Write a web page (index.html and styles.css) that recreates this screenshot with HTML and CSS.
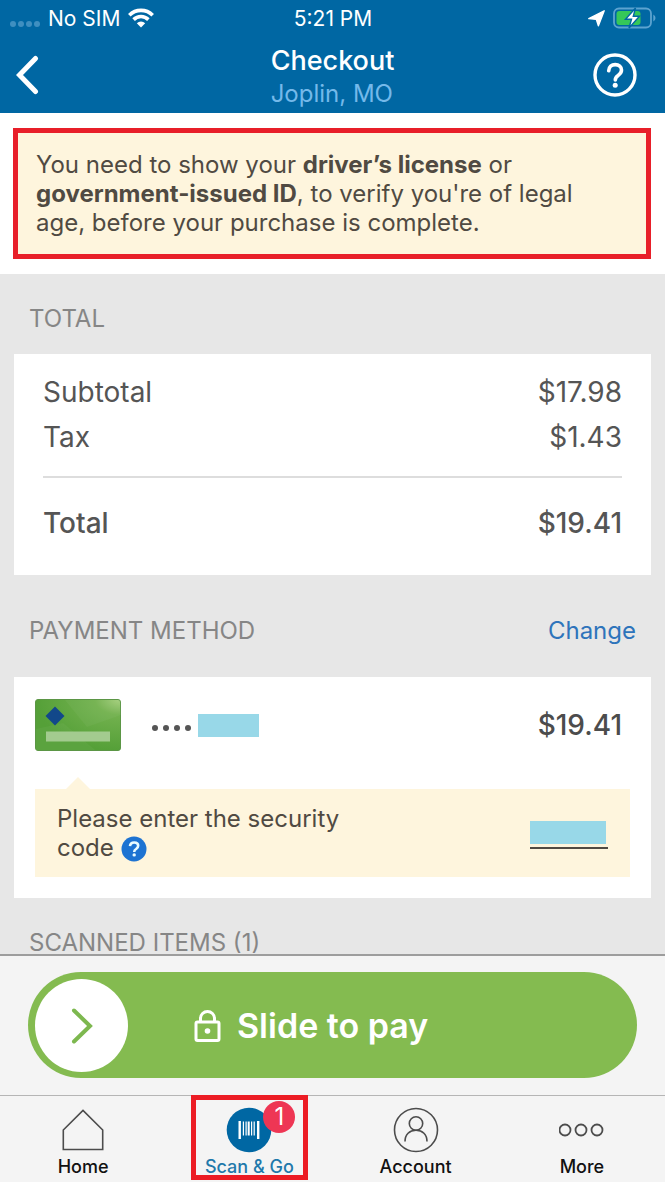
FILE: index.html
```
<!DOCTYPE html>
<html lang="en">
<head>
<meta charset="utf-8">
<meta name="viewport" content="width=device-width, initial-scale=1">
<title>Checkout</title>
<link rel="stylesheet" href="styles.css">
</head>
<body>
<div class="app">
  <header class="header">
    <div class="status">
      <div class="status-left">
        <svg class="signal" width="30" height="8" viewBox="0 0 30 8" fill="#3f8fc0"><circle cx="3" cy="4" r="3"/><circle cx="11" cy="4" r="3"/><circle cx="19" cy="4" r="3"/><circle cx="27" cy="4" r="3"/></svg>
        <span>No SIM</span>
        <svg width="26" height="20" viewBox="0 0 26 20" fill="none" stroke="#fff" stroke-width="3.6"><path d="M1.3 7.2a16.6 16.6 0 0 1 23.4 0"/><path d="M5.6 11.6a10.5 10.5 0 0 1 14.8 0"/><path d="M13 19.5l-4.2-4.3a6 6 0 0 1 8.4 0z" fill="#fff" stroke="none"/></svg>
      </div>
      <span class="clock">5:21 PM</span>
      <div class="status-right">
        <svg width="17" height="17" viewBox="0 0 17 17" fill="#fff"><path d="M16.2.8L10.400 15.800 8.300 9.400.8 8.600z" stroke="#fff" stroke-width="1.400" stroke-linejoin="round"/></svg>
        <svg width="43" height="22" viewBox="0 0 43 22"><rect x="1" y="1.5" width="37" height="19" rx="5" fill="none" stroke="#5ca3d0" stroke-width="1.8"/><rect x="3.5" y="4" width="24" height="14" rx="3" fill="#35c759"/><path d="M40.300 7.500q2.200 1.200 2.200 3.500t-2.200 3.500z" fill="#5ca3d0"/><path d="M22.500 1L12.500 12.200h6L16 21l10.500-11.700h-6.200z" fill="#fff" stroke="#0067a3" stroke-width="1.4"/></svg>
      </div>
    </div>
    <div class="titlebar">
      <button class="icon-button" type="button" aria-label="Back">
        <svg width="24" height="40" viewBox="0 0 24 40" fill="none" stroke="#fff" stroke-width="5" stroke-linecap="round" stroke-linejoin="miter"><path d="M20.500 3.500L4.500 20l16 16.500"/></svg>
      </button>
      <div class="titles">
        <h1 class="title">Checkout</h1>
        <p class="store">Joplin, MO</p>
      </div>
      <button class="icon-button icon-button-end" type="button" aria-label="Help">
        <svg width="44" height="44" viewBox="0 0 44 44" fill="none" stroke="#fff"><circle cx="22" cy="22" r="20" stroke-width="3.400"/><path d="M15.700 17.800c.2-4 2.900-6.200 6.500-6.200 3.700 0 6.300 2.200 6.300 5.500 0 2.600-1.400 4-3.400 5.300-2 1.300-2.800 2.300-2.800 4.600" stroke-width="3.600" stroke-linecap="round"/><circle cx="22.200" cy="32.300" r="2.500" fill="#fff" stroke="none"/></svg>
      </button>
    </div>
  </header>

  <main class="content">
    <div class="notice-area">
      <p class="notice">You need to show your <strong>driver’s license</strong> or <strong>government-issued ID</strong>, to verify you're of legal age, before your purchase is complete.</p>
    </div>

    <section>
      <div class="section-head"><h2 class="section-title">TOTAL</h2></div>
      <dl class="card totals">
        <div class="line"><dt>Subtotal</dt><dd>$17.98</dd></div>
        <div class="line"><dt>Tax</dt><dd>$1.43</dd></div>
        <div class="line line-total"><dt>Total</dt><dd>$19.41</dd></div>
      </dl>
    </section>

    <section>
      <div class="section-head section-head-tall">
        <h2 class="section-title">PAYMENT METHOD</h2>
        <a class="change" href="#payment">Change</a>
      </div>
      <div class="card payment">
        <div class="method">
          <svg width="86" height="52" viewBox="0 0 86 52">
            <defs><radialGradient id="cardShade" cx="1" cy="0" r="1"><stop offset="0" stop-color="#a5cf7d"/><stop offset=".3" stop-color="#72b14e"/><stop offset="1" stop-color="#55a038"/></radialGradient></defs>
            <rect x=".5" y=".5" width="85" height="51" rx="2.500" fill="url(#cardShade)" stroke="#5b9645"/>
            <path d="M30 1L52 28 86 16V1z" fill="#fff" opacity=".04"/><path d="M1 30L28 24 60 51H1z" fill="#fff" opacity=".04"/>
            <path d="M20 7.500l9.500 9.500-9.500 9.500L10.500 17z" fill="#12488a"/>
            <rect x="11" y="32.500" width="64" height="10" fill="#a3cb8f"/>
          </svg>
          <svg class="mask" width="41" height="8" viewBox="0 0 41 8" fill="#555"><circle cx="4" cy="4" r="3"/><circle cx="15" cy="4" r="3"/><circle cx="26" cy="4" r="3"/><circle cx="37" cy="4" r="3"/></svg>
          <span class="redacted"></span>
          <span class="amount">$19.41</span>
        </div>
        <div class="security">
          <div class="security-label">
            <label for="code">Please enter the security code</label>
            <button class="hint" type="button" aria-label="About the security code">
              <svg width="26" height="26" viewBox="0 0 26 26" fill="none"><circle cx="13" cy="13" r="12.500" fill="#1d73d2"/><path d="M9 10.200c.2-2.400 1.800-3.700 4.200-3.700 2.300 0 4 1.300 4 3.300 0 1.500-.8 2.300-2.100 3.200-1.300.8-1.900 1.400-1.900 3" stroke="#e9fbff" stroke-width="2.600"/><circle cx="13.200" cy="18.900" r="1.700" fill="#e9fbff"/></svg>
            </button>
          </div>
          <input class="code" id="code" type="text" inputmode="numeric">
        </div>
      </div>
    </section>

    <section>
      <div class="section-head"><h2 class="section-title">SCANNED ITEMS (1)</h2></div>
    </section>
  </main>

  <footer class="footer">
    <div class="pay">
      <div class="slider">
        <span class="knob"><svg width="24" height="38" viewBox="0 0 24 38" fill="none" stroke="#7db84f" stroke-width="4" stroke-linecap="round"><path d="M4 3.500L20 19 4 34.500"/></svg></span>
        <svg width="27" height="32" viewBox="0 0 27 32" fill="none" stroke="#fff" stroke-width="3"><rect x="2" y="12" width="23" height="18.500" rx="1.500"/><path d="M6.500 12V8.500a7 7 0 0 1 14 0V12"/><circle cx="13.500" cy="21" r="2.800" fill="#fff" stroke="none"/></svg>
        <label class="slide-label" for="slide">Slide to pay</label>
        <input class="slide-input" id="slide" type="range" min="0" max="100" value="0">
      </div>
    </div>
    <nav class="tabs">
      <a class="tab" href="#home">
        <svg width="46" height="46" viewBox="0 0 46 46" fill="none" stroke="#4c4c4c" stroke-width="1.600"><path d="M3.300 42.500V23L23 3.500 42.700 23v19.500z"/></svg>
        <span>Home</span>
      </a>
      <a class="tab tab-active" href="#scan" aria-current="page">
        <span class="scan-icon">
          <svg width="46" height="46" viewBox="0 0 46 46"><circle cx="23" cy="23" r="22.300" fill="#0067a3"/><g fill="#fff"><rect x="12.500" y="14" width="2.400" height="18"/><rect x="16.800" y="14.500" width="1.200" height="14"/><rect x="19.500" y="14.500" width="1.200" height="14"/><rect x="21.700" y="14.500" width="2" height="14"/><rect x="25" y="14.500" width="1.200" height="14"/><rect x="27.600" y="14.500" width="1.200" height="14"/><rect x="31" y="14" width="2.400" height="18"/></g></svg>
          <span class="badge">1</span>
        </span>
        <span>Scan &amp; Go</span>
      </a>
      <a class="tab" href="#account">
        <svg width="46" height="46" viewBox="0 0 46 46" fill="none" stroke="#4c4c4c" stroke-width="1.600"><circle cx="23" cy="23" r="21.500"/><circle cx="23" cy="16.500" r="6.700"/><path d="M12 34.500c0-7 4.500-11.300 11-11.300s11 4.300 11 11.300"/></svg>
        <span>Account</span>
      </a>
      <a class="tab" href="#more">
        <svg width="46" height="46" viewBox="0 0 46 46" fill="none" stroke="#4c4c4c" stroke-width="1.800"><circle cx="6" cy="23" r="5.500"/><circle cx="22" cy="23" r="5.500"/><circle cx="38" cy="23" r="5.500"/></svg>
        <span>More</span>
      </a>
    </nav>
  </footer>
</div>
</body>
</html>
```
FILE: styles.css
```
* { box-sizing: border-box; }

body {
  margin: 0;
  font-family: Inter, "Liberation Sans", sans-serif;
  font-size: 24px;
  line-height: 29px;
  color: #555;
  background: #e7e7e7;
}

h1, h2, p, dl, dd { margin: 0; font-weight: inherit; font-size: inherit; }
svg { display: block; flex: none; }
a { text-decoration: none; color: inherit; }
button { padding: 0; border: 0; background: none; }

.app { display: flex; flex-direction: column; height: 100vh; }

/* Header */
.header { background: #0067a3; color: #fff; padding-bottom: 5px; }
.status {
  display: grid;
  grid-template-columns: 1fr auto 1fr;
  align-items: center;
  height: 36px;
  padding: 0 9px 0 10px;
  font-size: 21px;
}
.status-left, .status-right { display: flex; align-items: center; gap: 8px; }
.status-right { justify-content: flex-end; }
.signal { margin-top: 12px; }
.titlebar {
  display: grid;
  grid-template-columns: 1fr auto 1fr;
  align-items: center;
  height: 72px;
  padding: 4px 28px 0 15px;
}
.icon-button { justify-self: start; }
.icon-button-end { justify-self: end; }
.titles { padding: 4px 0 0 13px; }
.title { font-size: 27px; line-height: 34px; font-weight: 500; }
.store { line-height: 32px; color: #74b9ea; }

/* Scrolling content */
.content { flex: 1; min-height: 0; overflow-y: auto; scrollbar-width: none; }
.notice-area { padding: 15px 14px 15px 13px; background: #fff; }
.notice {
  padding: 17px 48px 17px 18px;
  border: 5px solid #e81f29;
  background: #fef5dd;
  color: #504a42;
}
.notice strong { font-weight: 700; }

.section-head {
  display: flex;
  justify-content: space-between;
  align-items: center;
  padding: 30px 29px 21px;
}
.section-head-tall { padding-bottom: 32px; }
.section-title { color: #868686; }
.change { color: #2e74bb; }
.card { margin: 0 14px; background: #fff; font-size: 28px; }

.totals { padding: 16px 29px 29px; margin-bottom: 11px; }
.line { display: flex; justify-content: space-between; line-height: 45px; }
.line-total { margin-top: 16px; padding-top: 23px; border-top: 2px solid #ddd; font-weight: 500; }

.payment { padding: 22px 21px 21px; }
.method { display: flex; align-items: center; padding-right: 8px; }
.mask { margin: 6px 6px 0 30px; }
.redacted { width: 61px; height: 23px; background: #98d8e8; }
.amount { margin-left: auto; font-weight: 500; color: #4c4c4c; }
.security {
  position: relative;
  display: flex;
  align-items: center;
  justify-content: space-between;
  margin-top: 38px;
  padding: 15px 22px 15px 22px;
  background: #fef5dd;
  color: #504a42;
  font-size: 24px;
}
.security::before {
  content: "";
  position: absolute;
  left: 31px;
  bottom: 100%;
  border: 12px solid transparent;
  border-top: 0;
  border-bottom-color: #fef5dd;
}
.security-label { max-width: 310px; }
.hint { display: inline-block; vertical-align: middle; }
.code {
  width: 78px;
  height: 28px;
  margin-top: 3px;
  padding: 0;
  border: 0;
  border-bottom: 2px solid #504a42;
  background: linear-gradient(#98d8e8, #98d8e8) 0 0 / 76px 23px no-repeat;
  font: inherit;
}

/* Footer */
.footer { border-top: 2px solid #9d9d9d; background: #f4f4f4; }
.pay { padding: 16px 28px 17px; }
.slider {
  position: relative;
  display: flex;
  align-items: center;
  padding: 7px 7px 6px;
  border-radius: 53px;
  background: #84bb50;
  color: #fff;
}
.knob {
  display: flex;
  align-items: center;
  justify-content: center;
  width: 93px;
  height: 93px;
  margin-right: 66px;
  border-radius: 50%;
  background: #fff;
}
.slide-label { margin-left: 16px; font-size: 34px; line-height: 42px; font-weight: 600; }
.slide-input { position: absolute; inset: 0; width: 100%; height: 100%; margin: 0; opacity: 0; }

.tabs {
  display: grid;
  grid-template-columns: repeat(4, 1fr);
  justify-items: center;
  height: 87px;
  border-top: 1px solid #b5b5b5;
}
.tab {
  position: relative;
  display: flex;
  flex-direction: column;
  align-items: center;
  gap: 2px;
  padding-top: 11px;
  font-size: 18px;
  line-height: 24px;
  font-weight: 500;
  color: #111;
}
.tab-active { color: #1f79ab; }
.tab-active::after {
  content: "";
  position: absolute;
  inset: -1px -14px 2px;
  border: 5px solid #ec1c24;
}
.scan-icon { position: relative; }
.badge {
  position: absolute;
  top: -6px;
  left: 37px;
  width: 32px;
  height: 32px;
  border-radius: 50%;
  background: #ee3654;
  color: #fff;
  font-size: 24px;
  line-height: 32px;
  font-weight: 400;
  text-align: center;
}
```
